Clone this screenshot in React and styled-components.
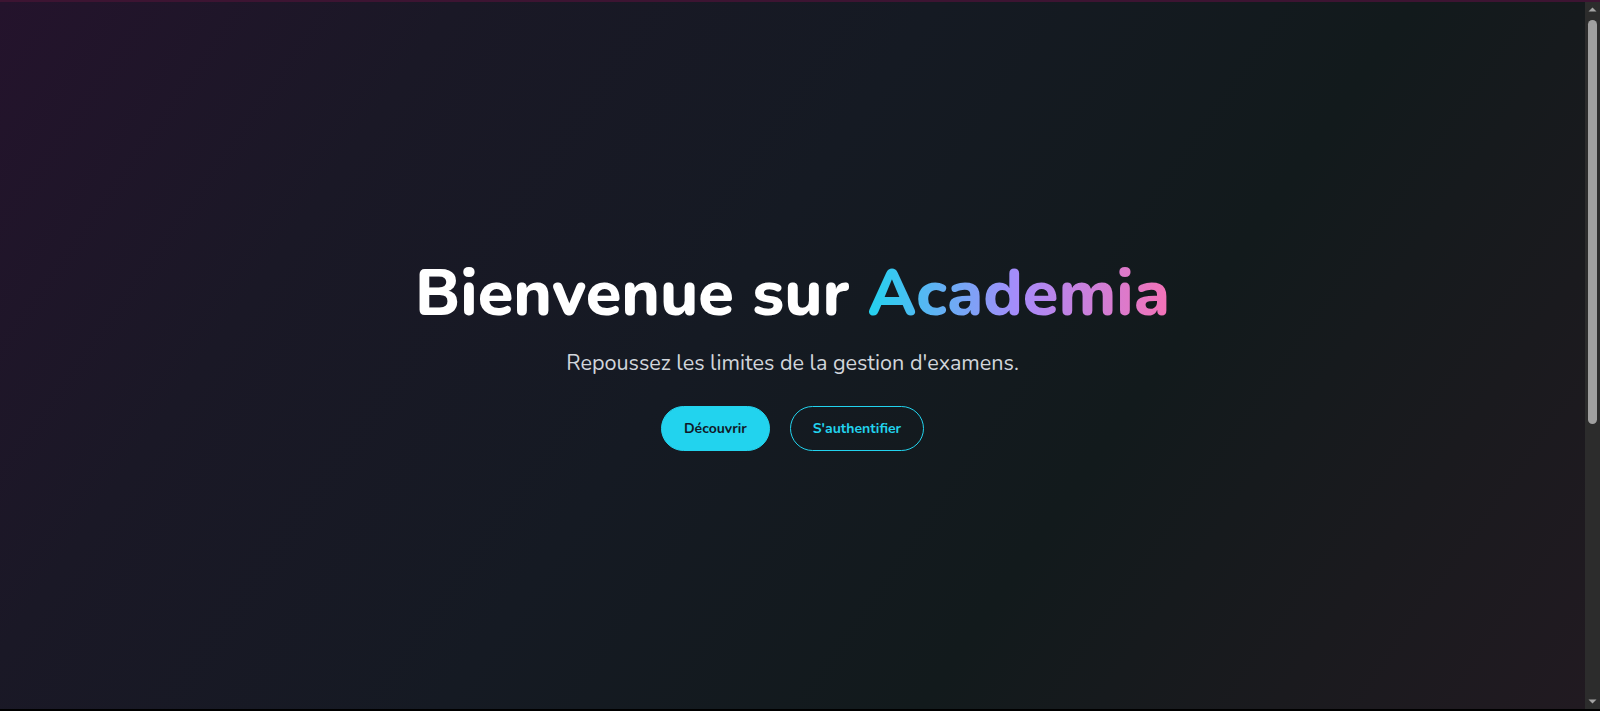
import React from "react";
import styled, { createGlobalStyle } from "styled-components";

const GlobalStyle = createGlobalStyle`
	html, body {
		margin: 0;
		height: 100%;
		overflow: hidden;
		background: #000;
	}
	#root {
		height: 100%;
	}
	* {
		box-sizing: border-box;
	}
`;

const Arrow = ({ down }) => (
	<svg width="15" height="15" viewBox="0 0 15 15">
		<path d={down ? "M3.5 5.5 L7.5 9.5 L11.5 5.5 Z" : "M3.5 9.5 L7.5 5.5 L11.5 9.5 Z"} fill="#a3a3a3" />
	</svg>
);

const App = () => {
	return (
		<>
			<GlobalStyle />
			<Frame>
				<Viewport>
					<Hero>
						<Title>
							Bienvenue sur <Brand>Academia</Brand>
						</Title>
						<Subtitle>Repoussez les limites de la gestion d'examens.</Subtitle>
						<Actions>
							<Button $variant="solid">Découvrir</Button>
							<Button $variant="outline">S'authentifier</Button>
						</Actions>
					</Hero>
					<Below />
				</Viewport>
				<Rail>
					<Arrow />
					<Track>
						<Thumb />
					</Track>
					<Arrow down />
				</Rail>
			</Frame>
		</>
	);
};

const Frame = styled.div`
	height: 100vh;
	display: flex;
	border-top: 2px solid #3d1432;
	border-bottom: 2px solid #000;
	font-family: "Nunito", "Lato", "Noto Sans", sans-serif;
`;

const Viewport = styled.main`
	flex: 1;
	min-width: 0;
	overflow: hidden;
	background: #15181f;
`;

const Rail = styled.div`
	width: 15px;
	display: flex;
	flex-direction: column;
	background: #2c2c2c;
	svg {
		display: block;
		flex: none;
	}
`;

const Track = styled.div`
	flex: 1;
	padding: 3px 3px 0;
`;

const Thumb = styled.div`
	height: 404px;
	border-radius: 5px;
	background: #9f9f9f;
`;

const Hero = styled.section`
	height: calc(100vh - 4px);
	padding-bottom: 6px;
	display: flex;
	flex-direction: column;
	align-items: center;
	justify-content: center;
	text-align: center;
	background: linear-gradient(
		125deg,
		#24132c 0%,
		#1a1826 22%,
		#151a23 45%,
		#121a1c 68%,
		#1a1a1e 85%,
		#211a21 100%
	);
`;

const Title = styled.h1`
	margin: 0 0 15px;
	font-size: 65px;
	font-weight: 800;
	line-height: 1.2;
	color: #fff;
`;

const Brand = styled.span`
	background: linear-gradient(90deg, #22d3ee 0%, #a78bfa 50%, #f472b6 100%);
	-webkit-background-clip: text;
	background-clip: text;
	color: transparent;
`;

const Subtitle = styled.p`
	margin: 0 0 28px;
	font-size: 21.6px;
	color: #d1d5db;
`;

const Actions = styled.div`
	display: flex;
	gap: 20px;
`;

const Button = styled.button`
	font-family: inherit;
	font-size: 14px;
	font-weight: 700;
	line-height: 21px;
	padding: 11px 22px;
	border-radius: 9999px;
	cursor: pointer;
	border: 1px solid #22d3ee;
	background: ${(p) => (p.$variant === "solid" ? "#22d3ee" : "transparent")};
	color: ${(p) => (p.$variant === "solid" ? "#111827" : "#22d3ee")};
`;

const Below = styled.section`
	height: 480px;
	background: #15181f;
`;

export default App;
